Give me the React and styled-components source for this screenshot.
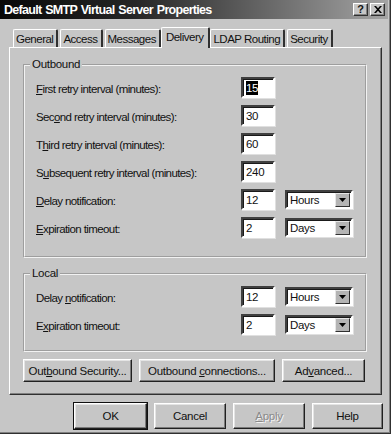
import React from "react";
import styled, { createGlobalStyle } from "styled-components";

const GlobalStyle = createGlobalStyle`
  html, body {
    margin: 0;
    padding: 0;
    background: #c6c6c6;
  }
  body {
    font-family: "Liberation Sans", Arial, sans-serif;
    font-size: 11px;
    color: #111;
  }
`;

// label: [before, hotkey, after]
const outboundRows = [
  { label: ["", "F", "irst retry interval (minutes):"], value: "15", selected: true },
  { label: ["Sec", "o", "nd retry interval (minutes):"], value: "30" },
  { label: ["T", "h", "ird retry interval (minutes):"], value: "60" },
  { label: ["S", "u", "bsequent retry interval (minutes):"], value: "240" },
  { label: ["", "D", "elay notification:"], value: "12", unit: "Hours" },
  { label: ["", "E", "xpiration timeout:"], value: "2", unit: "Days" },
];

const localRows = [
  { label: ["Delay ", "n", "otification:"], value: "12", unit: "Hours" },
  { label: ["E", "x", "piration timeout:"], value: "2", unit: "Days" },
];

const tabs = ["General", "Access", "Messages", "Delivery", "LDAP Routing", "Security"];

const Label = ({ parts }) => (
  <LabelText>
    {parts[0]}
    <u>{parts[1]}</u>
    {parts[2]}
  </LabelText>
);

const Row = ({ row }) => (
  <>
    <Label parts={row.label} />
    <TextBox>{row.selected ? <Selected>{row.value}</Selected> : row.value}</TextBox>
    {row.unit ? (
      <Combo>
        <ComboText>{row.unit}</ComboText>
        <ComboArrow>
          <svg width="7" height="4" viewBox="0 0 7 4">
            <path d="M0 0h7L3.5 4z" fill="#000" />
          </svg>
        </ComboArrow>
      </Combo>
    ) : (
      <span />
    )}
  </>
);

const App = () => {
  return (
    <>
      <GlobalStyle />
      <Window>
        <TitleBar>
          <Title>Default SMTP Virtual Server Properties</Title>
          <TitleButtons>
            <CaptionButton>?</CaptionButton>
            <CaptionButton>
              <svg width="8" height="7" viewBox="0 0 8 7">
                <path d="M0 0h2l2 2.3L6 0h2L5 3.5 8 7H6L4 4.7 2 7H0l3-3.5z" fill="#000" />
              </svg>
            </CaptionButton>
          </TitleButtons>
        </TitleBar>

        <Body>
          <TabStrip>
            {tabs.map((t) => (
              <Tab key={t} $active={t === "Delivery"}>
                {t}
              </Tab>
            ))}
          </TabStrip>

          <Panel>
            <Group $pb={18} $mb={9}>
              <Legend>Outbound</Legend>
              <Grid>
                {outboundRows.map((r, i) => (
                  <Row key={i} row={r} />
                ))}
              </Grid>
            </Group>

            <Group $pb={15} $mb={6}>
              <Legend>Local</Legend>
              <Grid>
                {localRows.map((r, i) => (
                  <Row key={i} row={r} />
                ))}
              </Grid>
            </Group>

            <ButtonRow>
              <Button $w={109}>
                Out<u>b</u>ound Security...
              </Button>
              <Button $w={136}>
                {"Outbound "}
                <u>c</u>onnections...
              </Button>
              <Button $w={83}>
                Ad<u>v</u>anced...
              </Button>
            </ButtonRow>
          </Panel>

          <DialogButtons>
            <Button $w={73} $h={26} $default>
              OK
            </Button>
            <Button $w={72} $h={26}>
              Cancel
            </Button>
            <Button $w={72} $h={26} $disabled>
              <u>A</u>pply
            </Button>
            <Button $w={71} $h={26}>
              Help
            </Button>
          </DialogButtons>
        </Body>
      </Window>
    </>
  );
};

export default App;

const Window = styled.div`
  width: 391px;
  height: 434px;
  box-sizing: border-box;
  display: flex;
  flex-direction: column;
  border-right: 1px solid #303030;
  border-bottom: 1px solid #303030;
  box-shadow: inset -1px -1px 0 #808080;
  background: #c6c6c6;
  overflow: hidden;
`;

const TitleBar = styled.div`
  height: 19px;
  margin-right: 2px;
  display: flex;
  align-items: center;
  justify-content: space-between;
  background: linear-gradient(to right, #080808 0%, #262626 35%, #a4a4a4 100%);
  padding: 0 3px 0 4px;
`;

const Title = styled.div`
  color: #fff;
  font-family: "Liberation Sans", Arial, sans-serif;
  font-weight: bold;
  font-size: 12.5px;
  letter-spacing: -0.7px;
  word-spacing: 1px;
  padding-top: 1px;
`;

const TitleButtons = styled.div`
  display: flex;
  gap: 2px;
`;

const CaptionButton = styled.div`
  width: 15px;
  height: 13px;
  box-sizing: border-box;
  background: #c6c6c6;
  border: 1px solid;
  border-color: #fff #303030 #303030 #fff;
  box-shadow: inset -1px -1px 0 #808080;
  display: flex;
  align-items: center;
  justify-content: center;
  font-weight: bold;
  font-size: 11px;
  line-height: 1;
`;

const Body = styled.div`
  flex: 1;
  display: flex;
  flex-direction: column;
  padding: 7px 7px 0 9px;
`;

const TabStrip = styled.div`
  display: flex;
  align-items: flex-end;
  height: 21px;
  padding-left: 3px;
  position: relative;
  z-index: 1;
`;

const Tab = styled.div`
  height: ${(p) => (p.$active ? 21 : 18)}px;
  box-sizing: border-box;
  padding: 0 ${(p) => (p.$active ? 5 : 3)}px 0 ${(p) => (p.$active ? 4 : 2)}px;
  margin: 0 ${(p) => (p.$active ? -1 : 1)}px;
  margin-bottom: ${(p) => (p.$active ? -1 : 0)}px;
  display: flex;
  align-items: center;
  padding-bottom: ${(p) => (p.$active ? 3 : 0)}px;
  background: #c6c6c6;
  border-top: 1px solid #fff;
  border-left: 1px solid #fff;
  border-right: 2px solid #303030;
  border-radius: 2px 2px 0 0;
  letter-spacing: -0.5px;
  font-size: 11.5px;
  position: relative;
  z-index: ${(p) => (p.$active ? 2 : 1)};
`;

const Panel = styled.div`
  height: 348px;
  box-sizing: border-box;
  margin-right: 1px;
  border-top: 1px solid #fff;
  border-left: 1px solid #fff;
  border-right: 1px solid #303030;
  border-bottom: 1px solid #303030;
  box-shadow: inset -1px -1px 0 #808080;
  padding: 10px 14px 0 13px;
  display: flex;
  flex-direction: column;
`;

const Group = styled.fieldset`
  margin: 0 0 ${(p) => p.$mb}px 0;
  padding: 6px 12px ${(p) => p.$pb}px 11px;
  border: 2px groove #f2f2f2;
  min-width: 0;
`;

const Legend = styled.legend`
  padding: 0 2px;
  margin-left: -6px;
  font-size: 11.5px;
  letter-spacing: -0.3px;
  line-height: 13px;
`;

const Grid = styled.div`
  display: grid;
  grid-template-columns: 1fr 34px 68px;
  grid-auto-rows: 21px;
  column-gap: 10px;
  row-gap: 7px;
  align-items: center;
`;

const LabelText = styled.div`
  font-size: 11.5px;
  letter-spacing: -0.6px;
  white-space: nowrap;
  padding-top: 2px;
`;

const Sunken = styled.div`
  height: 21px;
  box-sizing: border-box;
  background: #fff;
  border: 2px solid;
  border-color: #404040 #fff #fff #404040;
  box-shadow: inset 1px 1px 0 #1a1a1a, 1px 1px 0 #e0e0e0;
  display: flex;
  align-items: center;
  font-size: 11.5px;
  letter-spacing: -0.3px;
`;

const TextBox = styled(Sunken)`
  padding-left: 3px;
`;

const Selected = styled.span`
  background: #000;
  color: #fff;
  padding: 1px 0;
`;

const Combo = styled(Sunken)`
  height: 19px;
  justify-content: space-between;
  padding: 0 1px 0 3px;
`;

const ComboText = styled.span``;

const ComboArrow = styled.div`
  width: 15px;
  height: 14px;
  box-sizing: border-box;
  background: #b4b4b4;
  border: 1px solid;
  border-color: #e6e6e6 #303030 #303030 #e6e6e6;
  display: flex;
  align-items: center;
  justify-content: center;
`;

const ButtonRow = styled.div`
  display: flex;
  justify-content: space-between;
  padding: 0 2px 0 0;
  margin-top: 1px;
`;

const Button = styled.div`
  width: ${(p) => p.$w}px;
  height: ${(p) => p.$h || 23}px;
  box-sizing: border-box;
  display: flex;
  align-items: center;
  justify-content: center;
  white-space: pre;
  background: #c6c6c6;
  font-size: 11.5px;
  letter-spacing: -0.3px;
  border: 1px solid;
  border-color: #fff #202020 #202020 #fff;
  box-shadow: inset -1px -1px 0 #7a7a7a, inset 1px 1px 0 #e4e4e4;
  color: ${(p) => (p.$disabled ? "#8a8a8a" : "#111")};
  text-shadow: ${(p) => (p.$disabled ? "1px 1px 0 #f4f4f4" : "none")};
  outline: ${(p) => (p.$default ? "1px solid #101010" : "none")};
`;

const DialogButtons = styled.div`
  display: flex;
  justify-content: flex-end;
  gap: 7px;
  padding: 8px 0 0 0;
`;
